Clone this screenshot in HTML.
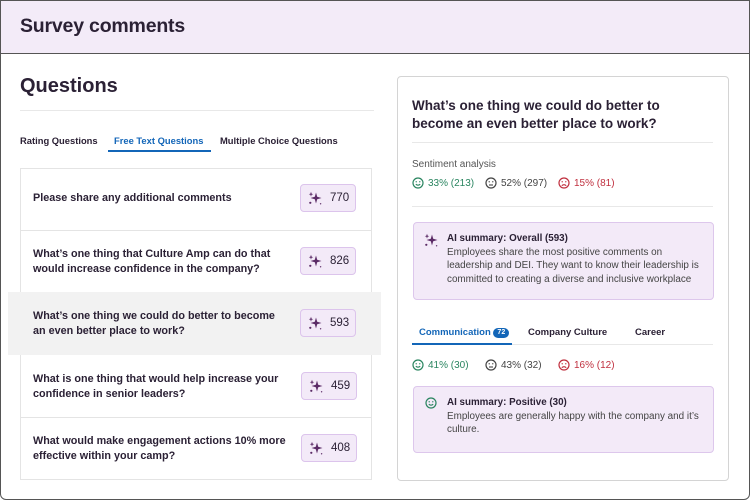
<!DOCTYPE html>
<html><head><style>
*{box-sizing:border-box;margin:0;padding:0}
body{width:750px;height:500px;background:#fff;font-family:"Liberation Sans",sans-serif;color:#2b2135;position:relative;overflow:hidden}
.frame{position:absolute;left:0;top:0;width:750px;height:500px;border:1.5px solid #555;border-radius:0 0 6px 6px;overflow:hidden}
.hdr{position:absolute;left:-2px;top:-2px;width:754px;height:55px;background:#f3ebf8;border-bottom:1.5px solid #555}
.hdr h1{position:absolute;left:21px;top:16px;font-size:19.5px;font-weight:bold;letter-spacing:-0.2px}
.a{position:absolute}
.qh{left:19px;top:74px;font-size:20px;font-weight:bold}
.rule{height:1px;background:#e8e8e8}
.tab{font-size:9.4px;font-weight:bold;top:134px}
.list{left:19px;top:167px;width:352px;height:312px;border:1px solid #e4e4e4}
.row{position:absolute;left:0;width:350px;height:62px;border-bottom:1px solid #e4e4e4}
.row .t{position:absolute;left:12px;font-size:10.8px;font-weight:bold;line-height:15px;color:#2b2135}
.badge{position:absolute;width:56px;height:28px;background:#f3eaf8;border:1.5px solid #dcc4ec;border-radius:4px;font-size:11.5px;display:flex;align-items:center;padding-left:7px;gap:8px}
.panel{left:396px;top:75px;width:332px;height:405px;border:1.5px solid #d4d4d4;border-radius:4px}
.s{font-size:10px;display:flex;align-items:center;gap:4px}
.box{position:absolute;left:412px;width:301px;background:#f3eaf8;border:1.5px solid #ddc7ec;border-radius:4px;font-size:9.9px;line-height:13.5px}
.box b{font-size:9.8px;color:#2b2135}
</style></head><body>
<svg width="0" height="0" style="position:absolute"><defs>
<symbol id="sp" viewBox="0 0 14 14"><path d="M8 1.5 L9.2 5.8 L13.5 7 L9.2 8.2 L8 12.5 L6.8 8.2 L2.5 7 L6.8 5.8 Z" fill="#5b2b66"/><path d="M3 0.8 L3.6 2.6 L5.2 3.2 L3.6 3.8 L3 5.6 L2.4 3.8 L0.8 3.2 L2.4 2.6 Z" fill="#5b2b66"/><circle cx="2.3" cy="11.8" r="1.1" fill="#5b2b66"/><circle cx="12.6" cy="12.8" r=".7" fill="#5b2b66"/></symbol>
<symbol id="hap" viewBox="0 0 12 12"><circle cx="6" cy="6" r="5" fill="none" stroke="currentColor" stroke-width="1.2"/><circle cx="4.2" cy="4.8" r=".7" fill="currentColor"/><circle cx="7.8" cy="4.8" r=".7" fill="currentColor"/><path d="M3.8 7.2 Q6 9.2 8.2 7.2" fill="none" stroke="currentColor" stroke-width="1.1"/></symbol>
<symbol id="neu" viewBox="0 0 12 12"><circle cx="6" cy="6" r="5" fill="none" stroke="currentColor" stroke-width="1.2"/><circle cx="4.2" cy="4.8" r=".7" fill="currentColor"/><circle cx="7.8" cy="4.8" r=".7" fill="currentColor"/><path d="M4 8 L8 8" stroke="currentColor" stroke-width="1.1"/></symbol>
<symbol id="sad" viewBox="0 0 12 12"><circle cx="6" cy="6" r="5" fill="none" stroke="currentColor" stroke-width="1.2"/><circle cx="4.2" cy="4.8" r=".7" fill="currentColor"/><circle cx="7.8" cy="4.8" r=".7" fill="currentColor"/><path d="M3.8 8.7 Q6 6.7 8.2 8.7" fill="none" stroke="currentColor" stroke-width="1.1"/></symbol>
</defs></svg>
<div class="frame">
<div class="hdr"><h1>Survey comments</h1></div>
<div class="a qh">Questions</div>
<div class="a rule" style="left:19px;top:109px;width:354px"></div>
<div class="a tab" style="left:19px">Rating Questions</div>
<div class="a tab" style="left:113px;color:#1366b8">Free Text Questions</div>
<div class="a tab" style="left:219px">Multiple Choice Questions</div>
<div class="a" style="left:107px;top:149px;width:103px;height:2px;background:#1366b8"></div>
<div class="a list">
<div class="row" style="top:0"><div class="t" style="top:22px">Please share any additional comments</div><div class="badge" style="left:279px;top:15px"><svg width="14" height="14"><use href="#sp"/></svg>770</div></div>
<div class="row" style="top:62px"><div class="t" style="top:16px">What’s one thing that Culture Amp can do that<br>would increase confidence in the company?</div><div class="badge" style="left:279px;top:16px"><svg width="14" height="14"><use href="#sp"/></svg>826</div></div>
<div class="row" style="top:187px"><div class="t" style="top:16px">What is one thing that would help increase your<br>confidence in senior leaders?</div><div class="badge" style="left:280px;top:16px"><svg width="14" height="14"><use href="#sp"/></svg>459</div></div>
<div class="row" style="top:249px;border-bottom:none"><div class="t" style="top:16px">What would make engagement actions 10% more<br>effective within your camp?</div><div class="badge" style="left:280px;top:16px"><svg width="14" height="14"><use href="#sp"/></svg>408</div></div>
</div>
<div class="a" style="left:7px;top:291px;width:373px;height:63px;background:#f2f2f2">
<div style="position:absolute;left:25px;top:17px;font-size:10.8px;font-weight:bold;line-height:15px">What’s one thing we could do better to become<br>an even better place to work?</div>
<div class="badge" style="left:292px;top:17px"><svg width="14" height="14"><use href="#sp"/></svg>593</div>
</div>
<div class="a panel"></div>
<div class="a" style="left:411px;top:96px;font-size:13.5px;font-weight:bold;line-height:18px">What’s one thing we could do better to<br>become an even better place to work?</div>
<div class="a rule" style="left:411px;top:141px;width:301px"></div>
<div class="a" style="left:411px;top:158px;font-size:10px;color:#555">Sentiment analysis</div>
<div class="a s" style="left:411px;top:176px;color:#2a8560"><svg width="12" height="12"><use href="#hap"/></svg>33% (213)</div>
<div class="a s" style="left:484px;top:176px;color:#444"><svg width="12" height="12"><use href="#neu"/></svg>52% (297)</div>
<div class="a s" style="left:557px;top:176px;color:#c0303f"><svg width="12" height="12"><use href="#sad"/></svg>15% (81)</div>
<div class="a rule" style="left:411px;top:205px;width:301px"></div>
<div class="box" style="top:221px;height:78px"><svg class="a" style="left:10px;top:10px" width="14" height="14"><use href="#sp"/></svg><div style="position:absolute;left:33px;top:9px;color:#444"><b>AI summary: Overall (593)</b><br>Employees share the most positive comments on<br>leadership and DEI. They want to know their leadership is<br>committed to creating a diverse and inclusive workplace</div></div>
<div class="a" style="left:418px;top:326px;font-size:9.5px;font-weight:bold;color:#1366b8">Communication <span style="display:inline-block;background:#1366b8;color:#fff;border-radius:6px;font-size:7px;padding:0 4px;line-height:10px;vertical-align:1px">72</span></div>
<div class="a" style="left:527px;top:326px;font-size:9.5px;font-weight:bold">Company Culture</div>
<div class="a" style="left:634px;top:326px;font-size:9.5px;font-weight:bold">Career</div>
<div class="a rule" style="left:411px;top:343px;width:301px"></div>
<div class="a" style="left:411px;top:342px;width:100px;height:2px;background:#1366b8"></div>
<div class="a s" style="left:411px;top:358px;color:#2a8560"><svg width="12" height="12"><use href="#hap"/></svg>41% (30)</div>
<div class="a s" style="left:484px;top:358px;color:#444"><svg width="12" height="12"><use href="#neu"/></svg>43% (32)</div>
<div class="a s" style="left:557px;top:358px;color:#c0303f"><svg width="12" height="12"><use href="#sad"/></svg>16% (12)</div>
<div class="box" style="top:385px;height:67px"><svg class="a" style="left:11px;top:10px;color:#2a8560" width="12" height="12"><use href="#hap"/></svg><div style="position:absolute;left:33px;top:9px;color:#444"><b>AI summary: Positive (30)</b><br>Employees are generally happy with the company and it’s<br>culture.</div></div>
</div>
</body></html>
